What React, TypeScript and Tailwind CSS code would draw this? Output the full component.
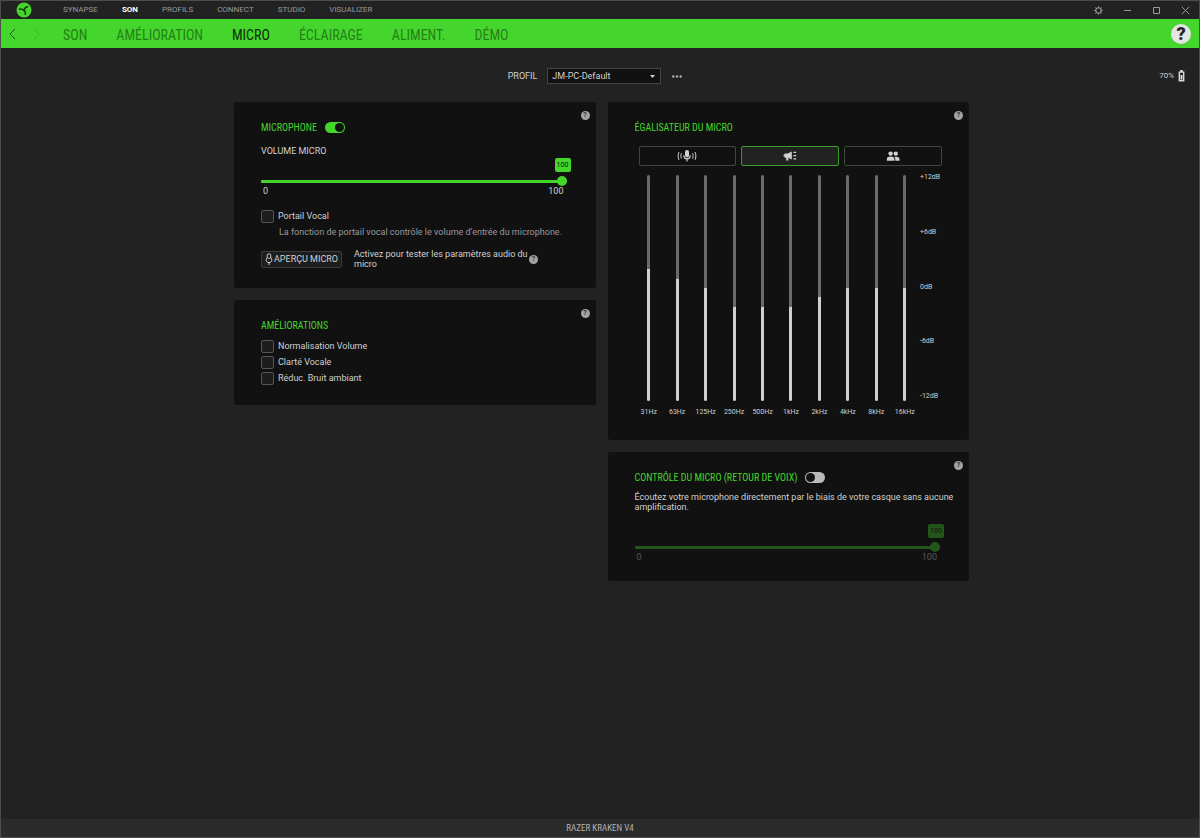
import { useState } from 'react'
import type { ReactNode } from 'react'
import clsx from 'clsx'

const MODULES = ['SYNAPSE', 'SON', 'PROFILS', 'CONNECT', 'STUDIO', 'VISUALIZER']
const TABS = ['SON', 'AMÉLIORATION', 'MICRO', 'ÉCLAIRAGE', 'ALIMENT.', 'DÉMO']
const ENHANCEMENTS = ['Normalisation Volume', 'Clarté Vocale', 'Réduc. Bruit ambiant']
const SCALE = ['+12dB', '+6dB', '0dB', '-6dB', '-12dB']

const BANDS = [
  { label: '31Hz', gain: 2 },
  { label: '63Hz', gain: 1 },
  { label: '125Hz', gain: 0 },
  { label: '250Hz', gain: -2 },
  { label: '500Hz', gain: -2 },
  { label: '1kHz', gain: -2 },
  { label: '2kHz', gain: -1 },
  { label: '4kHz', gain: 0 },
  { label: '8kHz', gain: 0 },
  { label: '16kHz', gain: 0 },
]

const heading = "font-['Roboto_Condensed','Liberation_Sans_Narrow',Roboto,sans-serif]"

function Logo() {
  return (
    <svg viewBox="0 0 16 16" className="size-4" aria-hidden="true">
      <circle cx="8" cy="8" r="7.5" fill="#44d62c" />
      <g fill="none" stroke="#123d0c" strokeLinecap="round" strokeLinejoin="round">
        <path d="M3.600 7.200c1.600-.4 3 .1 4.400 1.200" strokeWidth="1.600" />
        <path d="M8 8.400c.2-1.900 1.400-3.200 3.600-3.700" strokeWidth="1.600" />
        <path d="M8 8.400c1.300.9 1.700 2.200 1.300 3.800" strokeWidth="1.600" />
      </g>
    </svg>
  )
}

function HelpDot({ className }: { className?: string }) {
  return (
    <button
      type="button"
      aria-label="Aide"
      className={clsx(
        'flex size-[9px] items-center justify-center rounded-full bg-[#a3a3a3] text-[7px] leading-none font-bold text-[#333]',
        className,
      )}
    >
      ?
    </button>
  )
}

function Panel({ children }: { children: ReactNode }) {
  return (
    <section className="relative rounded-[3px] bg-[#111] pt-[19px] pr-[25px] pb-[19px] pl-[27px]">
      <HelpDot className="absolute top-[9px] right-[6px]" />
      {children}
    </section>
  )
}

function Title({ children }: { children: ReactNode }) {
  return (
    <h2 className={clsx(heading, 'text-[10px] leading-[13px] text-[#44d62c]')}>{children}</h2>
  )
}

function Toggle({ label, defaultChecked }: { label: string; defaultChecked?: boolean }) {
  return (
    <input
      type="checkbox"
      role="switch"
      aria-label={label}
      defaultChecked={defaultChecked}
      className="h-[11px] w-5 appearance-none rounded-full bg-[#bbb] p-px before:block before:size-[9px] before:rounded-full before:bg-[#111] checked:bg-[#44d62c] checked:before:ml-auto"
    />
  )
}

function Check({ label }: { label: string }) {
  return (
    <label className="flex h-4 items-center gap-1">
      <input
        type="checkbox"
        className="size-[13px] appearance-none rounded-[2px] border border-[#555] bg-[#1d1d1d] checked:bg-[#44d62c]"
      />
      {label}
    </label>
  )
}

function LevelSlider({ label, disabled }: { label: string; disabled?: boolean }) {
  const [value, setValue] = useState(100)

  return (
    <div className={clsx(disabled && 'opacity-35')}>
      <div className="flex justify-end">
        <output className="flex h-[14px] w-4 items-center justify-center rounded-[2px] bg-[#44d62c] text-[7px] text-[#111]">
          {value}
        </output>
      </div>
      <div className="mt-1 mr-1">
        <input
          type="range"
          aria-label={label}
          value={value}
          disabled={disabled}
          onChange={(e) => setValue(Number(e.target.value))}
          style={{
            backgroundImage: `linear-gradient(to right, #44d62c ${value}%, #555 ${value}%)`,
          }}
          className="block h-[10px] w-full appearance-none rounded-full bg-[length:100%_3px] bg-center bg-no-repeat [&::-webkit-slider-thumb]:size-[10px] [&::-webkit-slider-thumb]:appearance-none [&::-webkit-slider-thumb]:rounded-full [&::-webkit-slider-thumb]:bg-[#44d62c]"
        />
        <div className="flex justify-between pr-[3px] pl-[2px] text-[9px] leading-[10px]">
          <span>0</span>
          <span>100</span>
        </div>
      </div>
    </div>
  )
}

function Band({ label, gain }: { label: string; gain: number }) {
  const [value, setValue] = useState(gain)
  const fill = ((value + 12) / 24) * 100

  return (
    <label className="flex flex-col items-center gap-[6px]">
      <input
        type="range"
        min={-12}
        max={12}
        value={value}
        onChange={(e) => setValue(Number(e.target.value))}
        style={{
          backgroundImage: `linear-gradient(to top, #d0d0d0 ${fill}%, #6b6b6b ${fill}%)`,
        }}
        className="h-[226px] w-[3px] appearance-none rounded-full [direction:rtl] [writing-mode:vertical-lr] [&::-webkit-slider-thumb]:size-[3px] [&::-webkit-slider-thumb]:appearance-none [&::-webkit-slider-thumb]:opacity-0"
      />
      <span className="text-[7px] leading-[10px]">{label}</span>
    </label>
  )
}

function StudioMicIcon() {
  return (
    <svg viewBox="0 0 20 12" className="h-3 w-5" fill="none" stroke="currentColor" aria-hidden="true">
      <rect x="8" y="0" width="4" height="7.4" rx="2" fill="currentColor" stroke="none" />
      <path d="M6.800 5.200c0 2.200 1.400 3.600 3.200 3.600s3.200-1.400 3.200-3.600M10 8.600v2.900" strokeWidth="1.200" />
      <path d="M4.400 3.200c-.7 1.600-.7 3.800 0 5.400M15.600 3.200c.7 1.600.7 3.800 0 5.400" />
      <path d="M2 2c-1.200 2.400-1.200 5.400 0 7.800M18 2c1.200 2.400 1.200 5.400 0 7.800" />
    </svg>
  )
}

function MegaphoneIcon() {
  return (
    <svg viewBox="0 0 14 12" className="h-3 w-[14px]" fill="currentColor" aria-hidden="true">
      <path d="M1.600 3.400h3.200L8.800 1.400v8.200L5.400 7.800v2.800H3.200V7.800H1.600V6.600H.6v-2h1z" />
      <path d="M10.400 1.800h2.800V3h-2.800zM10.400 5h2.800v1.200h-2.800zM10.400 8.200h2.800v1.200h-2.800z" />
    </svg>
  )
}

function PeopleIcon() {
  return (
    <svg viewBox="0 0 14 12" className="h-3 w-[14px]" fill="currentColor" aria-hidden="true">
      <circle cx="4.6" cy="3.6" r="2.2" />
      <circle cx="9.8" cy="3.6" r="2.2" />
      <path d="M.8 10.8V9c0-1.6 1.8-2.4 3.800-2.400S8.400 7.400 8.400 9v1.800zM9.300 10.800V9c0-.9-.3-1.600-.8-2.100 2.400-.6 5 .1 5 2.100v1.800z" />
    </svg>
  )
}

const PRESETS = [
  { name: 'Studio', icon: <StudioMicIcon /> },
  { name: 'Diffusion', icon: <MegaphoneIcon /> },
  { name: 'Conférence', icon: <PeopleIcon /> },
]

function TitleBar() {
  return (
    <header className="flex h-[18px] items-center pr-[9px] pl-[15px]">
      <Logo />
      <nav className="ml-[31px] flex gap-6 text-[8px]">
        {MODULES.map((name) => (
          <a
            key={name}
            href="#"
            className={name === 'SON' ? 'font-bold text-white' : 'text-[#999]'}
          >
            {name}
          </a>
        ))}
      </nav>
      <div className="ml-auto flex gap-5 text-[#999]">
        <button type="button" aria-label="Paramètres">
          <svg viewBox="0 0 9 9" className="size-[9px]" fill="none" stroke="currentColor">
            <circle cx="4.5" cy="4.5" r="2.700" strokeWidth="1.100" />
            <path d="M4.500.3v1.500M4.500 7.200v1.500M.3 4.500h1.500M7.200 4.500h1.500M1.500 1.500l1 1M6.500 6.500l1 1M1.500 7.500l1-1M6.500 2.500l1-1" />
          </svg>
        </button>
        <button type="button" aria-label="Réduire">
          <svg viewBox="0 0 9 9" className="size-[9px]" stroke="currentColor">
            <path d="M1 4.500h7" />
          </svg>
        </button>
        <button type="button" aria-label="Agrandir">
          <svg viewBox="0 0 9 9" className="size-[9px]" fill="none" stroke="currentColor">
            <path d="M1.500 1.500h6v6h-6z" />
          </svg>
        </button>
        <button type="button" aria-label="Fermer">
          <svg viewBox="0 0 9 9" className="size-[9px]" stroke="currentColor">
            <path d="M.8.8l7.400 7.400M8.200.8L.8 8.200" />
          </svg>
        </button>
      </div>
    </header>
  )
}

function TabBar() {
  return (
    <div className="flex h-[29px] items-center bg-[#44d62c] px-2 text-[#248017]">
      <button type="button" aria-label="Précédent" className="text-[#115c08]">
        <svg viewBox="0 0 7 12" className="h-3 w-[7px]" fill="none" stroke="currentColor">
          <path d="M6 1L1 6l5 5" />
        </svg>
      </button>
      <button type="button" aria-label="Suivant" className="ml-[17px] opacity-40">
        <svg viewBox="0 0 7 12" className="h-3 w-[7px]" fill="none" stroke="currentColor">
          <path d="M1 1l5 5-5 5" />
        </svg>
      </button>
      <nav className={clsx(heading, 'ml-[23px] flex gap-[29px] pt-[2px] text-sm')}>
        {TABS.map((name) => (
          <a key={name} href="#" className={name === 'MICRO' ? 'text-[#0c2b08]' : ''}>
            {name}
          </a>
        ))}
      </nav>
      <button
        type="button"
        aria-label="Aide"
        className="ml-auto flex size-5 items-center justify-center rounded-full bg-[#e4e4e4] text-lg leading-none font-black text-[#222]"
      >
        ?
      </button>
    </div>
  )
}

function ProfileBar() {
  return (
    <div className="flex items-center px-[14px] pt-5 pb-[18px] text-[9px]">
      <div className="flex-1" />
      <label htmlFor="profile">PROFIL</label>
      <div className="relative ml-[10px]">
        <select
          id="profile"
          className="block h-4 w-[114px] appearance-none border border-[#444] bg-[#111] pl-1 text-[9px] leading-[14px]"
        >
          <option>JM-PC-Default</option>
        </select>
        <svg
          viewBox="0 0 5 3"
          className="pointer-events-none absolute top-[7px] right-[6px] h-[3px] w-[5px]"
          fill="currentColor"
          aria-hidden="true"
        >
          <path d="M0 0h5L2.500 3z" />
        </svg>
      </div>
      <button type="button" aria-label="Plus d’options" className="ml-[11px]">
        <svg viewBox="0 0 10 3" className="h-[3px] w-[10px]" fill="#b0b0b0">
          <circle cx="1.3" cy="1.5" r="1.2" />
          <circle cx="5" cy="1.5" r="1.2" />
          <circle cx="8.7" cy="1.5" r="1.2" />
        </svg>
      </button>
      <div className="ml-[10px] flex flex-1 items-center justify-end gap-1 text-[8px]">
        70%
        <svg viewBox="0 0 7 12" className="h-3 w-[7px]" aria-hidden="true">
          <path d="M2.200 0h2.600v1.400h1.600v10H.6v-10h1.600z" fill="#d8d8d8" />
          <path d="M2 2.800h3v7.200H2z" fill="#222" />
          <path d="M2.500 5h2v4.600h-2z" fill="#d8d8d8" />
        </svg>
      </div>
    </div>
  )
}

function MicrophonePanel() {
  return (
    <Panel>
      <div className="flex items-center gap-2">
        <Title>MICROPHONE</Title>
        <Toggle label="Microphone" defaultChecked />
      </div>
      <h3 className="mt-[11px] mb-px text-[9px] leading-3">VOLUME MICRO</h3>
      <LevelSlider label="Volume micro" />
      <div className="mt-3">
        <Check label="Portail Vocal" />
      </div>
      <p className="mt-[3px] ml-[18px] text-[#999]">
        La fonction de portail vocal contrôle le volume d’entrée du microphone.
      </p>
      <div className="mt-3 flex items-center">
        <button
          type="button"
          className="flex h-[17px] w-[81px] items-center justify-center gap-px rounded-[2px] border border-[#3c3c3c] bg-[#1d1d1d]"
        >
          <svg viewBox="0 0 8 12" className="h-3 w-2" fill="none" stroke="currentColor" aria-hidden="true">
            <rect x="2.2" y=".8" width="3.6" height="4.600" rx="1.600" />
            <path d="M2 4.600C.6 6.200.9 9.600 4 9.600S7.400 6.200 6 4.600M4 9.600V12" />
          </svg>
          APERÇU MICRO
        </button>
        <p className="ml-3 w-[175px]">Activez pour tester les paramètres audio du micro</p>
        <HelpDot />
      </div>
    </Panel>
  )
}

function EqualizerPanel() {
  const [preset, setPreset] = useState('Diffusion')

  return (
    <Panel>
      <Title>ÉGALISATEUR DU MICRO</Title>
      <div className="mt-3 mr-[2px] ml-1 grid grid-cols-3 gap-[5px]">
        {PRESETS.map(({ name, icon }) => (
          <button
            key={name}
            type="button"
            aria-label={name}
            aria-pressed={preset === name}
            onClick={() => setPreset(name)}
            className={clsx(
              'flex h-5 items-center justify-center rounded-[2px] border text-[#d0d0d0]',
              preset === name ? 'border-[#3a9a2c] bg-[#222]' : 'border-[#444] bg-[#111]',
            )}
          >
            {icon}
          </button>
        ))}
      </div>
      <div className="mt-[6px] flex pb-1">
        <div className="grid flex-1 grid-cols-10 pt-[3px]">
          {BANDS.map((band) => (
            <Band key={band.label} {...band} />
          ))}
        </div>
        <div className="flex h-[229px] w-[25px] flex-col justify-between pl-px text-[7px] leading-[10px]">
          {SCALE.map((mark) => (
            <span key={mark}>{mark}</span>
          ))}
        </div>
      </div>
    </Panel>
  )
}

export default function App() {
  return (
    <div className="flex min-h-screen flex-col border border-[#4a4f4a] bg-[#222] font-[Roboto,'Liberation_Sans',sans-serif] text-[9px] leading-[10px] text-[#d0d0d0]">
      <TitleBar />
      <TabBar />
      <ProfileBar />
      <main className="flex flex-1 justify-center pl-[3px]">
        <div className="grid w-full max-w-[735px] grid-cols-2 items-start gap-3">
          <div className="space-y-3">
            <MicrophonePanel />
            <Panel>
              <Title>AMÉLIORATIONS</Title>
              <div className="mt-[6px]">
                {ENHANCEMENTS.map((name) => (
                  <Check key={name} label={name} />
                ))}
              </div>
            </Panel>
          </div>
          <div className="space-y-3">
            <EqualizerPanel />
            <Panel>
              <div className="flex items-center gap-2">
                <Title>CONTRÔLE DU MICRO (RETOUR DE VOIX)</Title>
                <Toggle label="Contrôle du micro" />
              </div>
              <p className="mt-2 -mr-4 mb-3">
                Écoutez votre microphone directement par le biais de votre casque sans aucune
                amplification.
              </p>
              <LevelSlider label="Retour de voix" disabled />
            </Panel>
          </div>
        </div>
      </main>
      <footer
        className={clsx(
          heading,
          'flex h-[18px] items-center justify-center bg-[#2b2b2b] text-[9px] text-[#b0b0b0]',
        )}
      >
        RAZER KRAKEN V4
      </footer>
    </div>
  )
}
